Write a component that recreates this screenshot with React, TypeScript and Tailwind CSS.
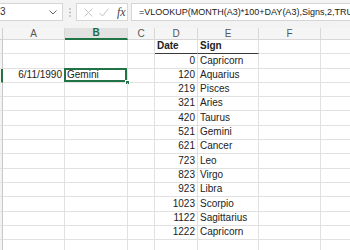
import React from "react";

const rows: { a?: string; b?: string; d?: string; e?: string }[] = [
  { d: "Date", e: "Sign" },
  { d: "0", e: "Capricorn" },
  { a: "6/11/1990", b: "Gemini", d: "120", e: "Aquarius" },
  { d: "219", e: "Pisces" },
  { d: "321", e: "Aries" },
  { d: "420", e: "Taurus" },
  { d: "521", e: "Gemini" },
  { d: "621", e: "Cancer" },
  { d: "723", e: "Leo" },
  { d: "823", e: "Virgo" },
  { d: "923", e: "Libra" },
  { d: "1023", e: "Scorpio" },
  { d: "1122", e: "Sagittarius" },
  { d: "1222", e: "Capricorn" },
  {},
  {},
];

const grid = "grid grid-cols-[3px_62px_63px_27px_43px_61px_62px_55px]";

export default function App() {
  return (
    <div className="w-[350px] h-[250px] overflow-hidden bg-white font-['Liberation_Sans',Arial,sans-serif] text-[#222]">
      {/* formula bar */}
      <div className="h-[28px] bg-[#f3f3f3] flex items-start pt-[3px]">
        <div className="w-[63px] h-[18px] bg-white border border-l-0 border-[#d6d6d6] flex items-center justify-between pr-[5px]">
          <span className="text-[10px] text-[#333] leading-none">3</span>
          <svg width="8" height="5" viewBox="0 0 8 5">
            <polyline points="0.5,0.5 4,4 7.5,0.5" fill="none" stroke="#666" strokeWidth="1" />
          </svg>
        </div>
        <div className="w-[13px] h-[18px] flex items-center justify-center">
          <svg width="2" height="9" viewBox="0 0 2 9">
            <circle cx="1" cy="1" r="0.8" fill="#9a9a9a" />
            <circle cx="1" cy="4.5" r="0.8" fill="#9a9a9a" />
            <circle cx="1" cy="8" r="0.8" fill="#9a9a9a" />
          </svg>
        </div>
        <div className="w-[52px] h-[18px] bg-white border border-[#d6d6d6] flex items-center pl-[7px]">
          <svg width="9" height="9" viewBox="0 0 9 9">
            <path d="M0.5 0.5 L8.5 8.5 M8.5 0.5 L0.5 8.5" stroke="#c4c4c4" strokeWidth="1" fill="none" />
          </svg>
          <svg width="10" height="9" viewBox="0 0 10 9" className="ml-[6px]">
            <polyline points="0.5,5 3.5,8 9.5,0.5" stroke="#c4c4c4" strokeWidth="1" fill="none" />
          </svg>
          <span className="ml-[8px] text-[12px] italic font-['Liberation_Serif',serif] text-[#444] leading-none">fx</span>
        </div>
        <div className="ml-[3px] flex-1 min-w-0 h-[18px] bg-white border border-r-0 border-[#d6d6d6] flex items-center pl-[7px] overflow-hidden">
          <span className="text-[9px] whitespace-nowrap text-[#222] leading-none">
            =VLOOKUP(MONTH(A3)*100+DAY(A3),Signs,2,TRUE)
          </span>
        </div>
      </div>
      {/* column headers */}
      <div className={`${grid} h-[12px] bg-[#f5f5f5] text-[10px] text-[#555] leading-none`}>
        <div className="border-r border-b border-[#d0d0d0]" />
        <div className="border-r border-b border-[#d8d8d8] flex items-center justify-center">A</div>
        <div className="border-r border-b-2 border-b-[#217346] border-r-[#d8d8d8] bg-[#e2e2e2] text-[#1f6b41] font-bold flex items-center justify-center">B</div>
        <div className="border-r border-b border-[#d8d8d8] flex items-center justify-center">C</div>
        <div className="border-r border-b border-[#d8d8d8] flex items-center justify-center">D</div>
        <div className="border-r border-b border-[#d8d8d8] flex items-center justify-center">E</div>
        <div className="border-r border-b border-[#d8d8d8] flex items-center justify-center">F</div>
        <div className="border-b border-[#d8d8d8]" />
      </div>
      {/* rows */}
      {rows.map((r, i) => {
        const header = i === 0;
        const sel = i === 2;
        return (
          <div key={i} className={`${grid} h-[14.3px] text-[10px] leading-none`}>
            <div className={`bg-[#f3f3f3] border-b border-[#e1e1e1] ${sel ? "border-r-2 border-r-[#217346]" : "border-r border-r-[#c8c8c8]"}`} />
            <div className="border-r border-b border-[#e1e1e1] flex items-end justify-end pr-[2px] pb-[2px]">{r.a}</div>
            <div className="relative border-r border-b border-[#e1e1e1] flex items-end pl-[2px] pb-[2px]">
              {r.b}
              {sel && (
                <>
                  <div className="absolute -left-px -top-px -right-0 -bottom-0 border-2 border-[#217346]" />
                  <div className="absolute -right-[3px] -bottom-[3px] w-[5px] h-[5px] bg-[#217346] border border-white" />
                </>
              )}
            </div>
            <div className="border-r border-b border-[#e1e1e1]" />
            <div className={`border-r flex items-end pb-[2px] ${header ? "border-b-[1.5px] border-b-[#3a3a3a] border-r-[#e1e1e1] justify-start pl-[2px] font-bold" : "border-b border-[#e1e1e1] justify-end pr-[2px]"}`}>{r.d}</div>
            <div className={`border-r flex items-end pb-[2px] pl-[2px] ${header ? "border-b-[1.5px] border-b-[#3a3a3a] border-r-[#e1e1e1] font-bold" : "border-b border-[#e1e1e1]"}`}>{r.e}</div>
            <div className="border-r border-b border-[#e1e1e1]" />
            <div className="border-b border-[#e1e1e1]" />
          </div>
        );
      })}
    </div>
  );
}
